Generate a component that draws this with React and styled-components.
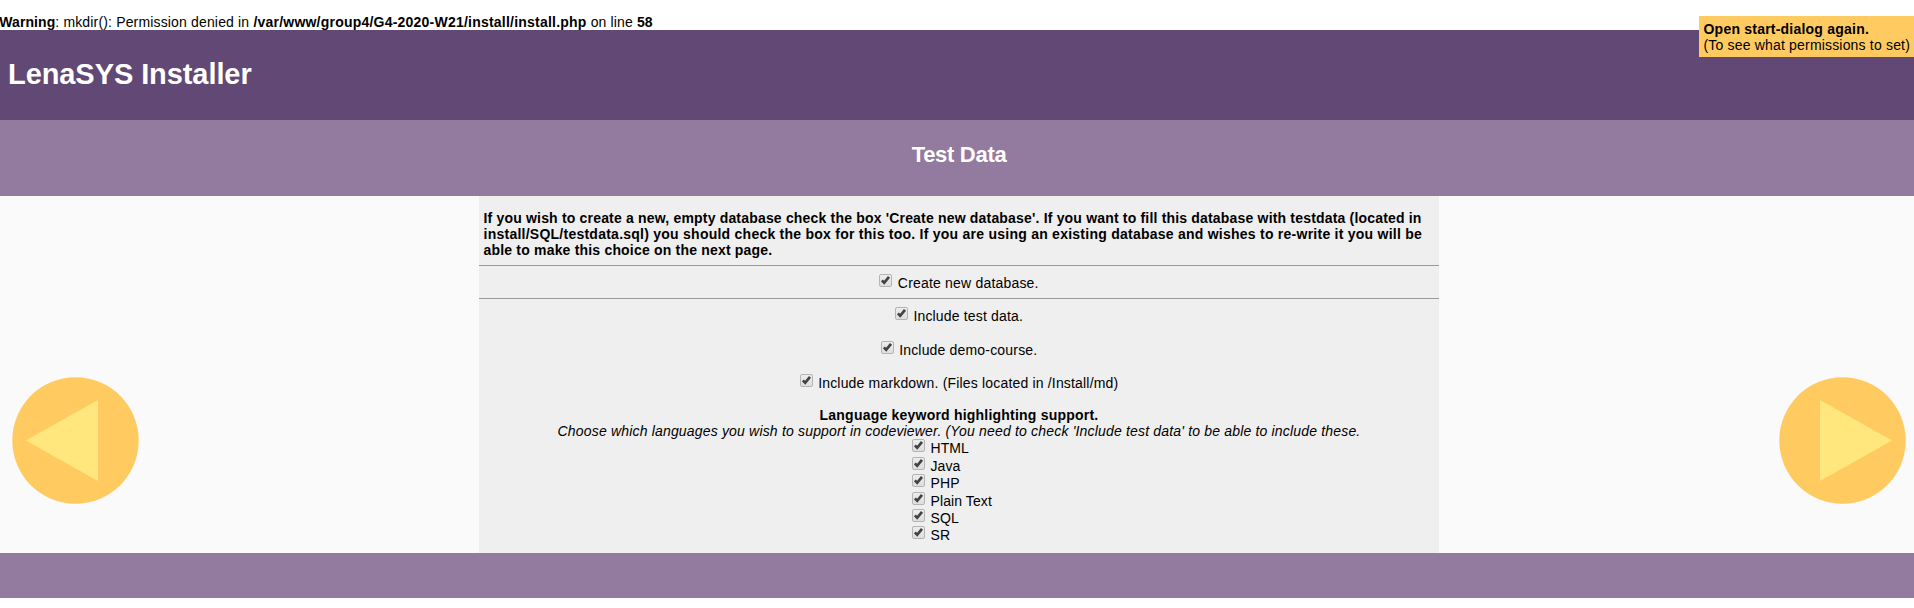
import React from "react";
import styled, { createGlobalStyle } from "styled-components";

const GlobalStyle = createGlobalStyle`
  * { box-sizing: border-box; }
  html { background: #fff; overflow: hidden; }
  body {
    margin: 0;
    overflow: hidden;
    font: 14px/16px Arial, "Liberation Sans", sans-serif;
    color: #000;
  }
`;

const Page = styled.div`
  width: 1918px;
`;

const Warning = styled.div`
  height: 30px;
  margin-left: -0.7px;
  padding-top: 14px;
  letter-spacing: 0.16px;
  white-space: nowrap;
`;

const Strong = styled.b`
  letter-spacing: ${(p) => p.$spacing || 0}px;
`;

const Header = styled.header`
  height: 90px;
  padding: 28px 0 0 8px;
  background: #614875;
  color: #fff;
`;

const Title = styled.h1`
  margin: 0;
  font-size: 29px;
  line-height: 32px;
  letter-spacing: -0.08px;
`;

const StepBar = styled.div`
  height: 76px;
  padding-top: 23px;
  background: #927b9e;
  color: #fff;
  text-align: center;
`;

const StepTitle = styled.h2`
  margin: 0;
  font-size: 22px;
  line-height: 24px;
  letter-spacing: -0.3px;
`;

const Main = styled.main`
  display: flex;
  justify-content: space-between;
  height: 357px;
  padding: 0 12px;
  background: #fafafa;
`;

const ArrowButton = styled.button`
  align-self: flex-start;
  width: 127px;
  height: 127px;
  margin: 181px 0 0;
  padding: 0;
  border: 0;
  background: none;
  transform: ${(p) => (p.$next ? "scaleX(-1)" : "none")};

  svg { display: block; }
`;

const Panel = styled.section`
  width: 960px;
  padding-top: 14px;
  background: #efefef;
`;

const Intro = styled.p`
  margin: 0 0 7px;
  padding: 0 4.5px;
  font-weight: bold;
  white-space: nowrap;
`;

const Line = styled.span`
  display: block;
  letter-spacing: ${(p) => p.$spacing || 0}px;
`;

const Divider = styled.hr`
  height: 1px;
  margin: 0;
  border: 0;
  background: #9a9a9a;
`;

const Option = styled.label`
  display: flex;
  justify-content: center;
  height: 17px;
  margin: ${(p) => p.$gap}px 0 ${(p) => p.$below || 0}px;
`;

const LanguageList = styled.div`
  display: flex;
  flex-direction: column;
  width: 94px;
  margin: 0.35px 0 0 433px;
`;

const Language = styled.label`
  display: flex;
  height: 17.4px;
`;

const Label = styled.span`
  margin: 1px 0 0 ${(p) => p.$offset || 6}px;
  letter-spacing: ${(p) => p.$spacing || 0}px;
  white-space: nowrap;
`;

const Box = styled.span`
  flex: none;
  width: 13px;
  height: 13px;
  border: 1px solid #b4b4b4;
  border-radius: 2px;
  background: linear-gradient(#ededed, #dedede);

  svg { display: block; }
`;

const Support = styled.div`
  padding-top: 16px;
  text-align: center;
`;

const SupportTitle = styled.b`
  display: block;
  letter-spacing: 0.215px;
`;

const SupportNote = styled.i`
  display: block;
  letter-spacing: 0.177px;
`;

const Footer = styled.footer`
  height: 45px;
  background: #927b9e;
`;

const DialogLink = styled.div`
  position: fixed;
  top: 16px;
  right: 0;
  width: 215px;
  height: 41px;
  padding: 5px 0 0 4.5px;
  background: #ffcb61;
  white-space: nowrap;
`;

function Check() {
  return (
    <Box>
      <svg width="11" height="11" viewBox="0 0 11 11">
        <path d="M1.9 5.3 L4.2 7.8 L9 1.8" fill="none" stroke="#424242" strokeWidth="2.7" />
      </svg>
    </Box>
  );
}

function Arrow({ next }) {
  return (
    <ArrowButton $next={next} aria-label={next ? "Next" : "Back"}>
      <svg width="127" height="127" viewBox="0 0 127 127">
        <circle cx="63.5" cy="63.5" r="63.2" fill="#ffcb61" />
        <path d="M14 63.5 L86 23 V104 Z" fill="#ffe77d" />
      </svg>
    </ArrowButton>
  );
}

const languages = ["HTML", "Java", "PHP", "Plain Text", "SQL", "SR"];

export default function App() {
  return (
    <Page>
      <GlobalStyle />
      <Warning>
        <Strong $spacing={0.07}>Warning</Strong>: mkdir(): Permission denied in{" "}
        <Strong $spacing={0.22}>/var/www/group4/G4-2020-W21/install/install.php</Strong> on line <Strong>58</Strong>
      </Warning>
      <Header>
        <Title>LenaSYS Installer</Title>
      </Header>
      <StepBar>
        <StepTitle>Test Data</StepTitle>
      </StepBar>
      <Main>
        <Arrow />
        <Panel>
          <Intro>
            <Line $spacing={0.183}>If you wish to create a new, empty database check the box 'Create new database'. If you want to fill this database with testdata (located in</Line>
            <Line $spacing={0.247}>install/SQL/testdata.sql) you should check the box for this too. If you are using an existing database and wishes to re-write it you will be</Line>
            <Line $spacing={0.19}>able to make this choice on the next page.</Line>
          </Intro>
          <Divider />
          <Option $gap={8} $below={7}><Check /><Label $offset={5.5} $spacing={0.19}>Create new database.</Label></Option>
          <Divider />
          <Option $gap={8}><Check /><Label $offset={5.5} $spacing={0.17}>Include test data.</Label></Option>
          <Option $gap={17}><Check /><Label $offset={5.5} $spacing={0.18}>Include demo-course.</Label></Option>
          <Option $gap={16}><Check /><Label $offset={5.5} $spacing={0.175}>Include markdown. (Files located in /Install/md)</Label></Option>
          <Support>
            <SupportTitle>Language keyword highlighting support.</SupportTitle>
            <SupportNote>Choose which languages you wish to support in codeviewer. (You need to check 'Include test data' to be able to include these.</SupportNote>
          </Support>
          <LanguageList>
            {languages.map((name) => (
              <Language key={name}><Check /><Label $offset={5.5} $spacing={0.1}>{name}</Label></Language>
            ))}
          </LanguageList>
        </Panel>
        <Arrow next />
      </Main>
      <Footer />
      <DialogLink>
        <Line as="b" $spacing={0.22}>Open start-dialog again.</Line>
        <Line $spacing={0.18}>(To see what permissions to set)</Line>
      </DialogLink>
    </Page>
  );
}
